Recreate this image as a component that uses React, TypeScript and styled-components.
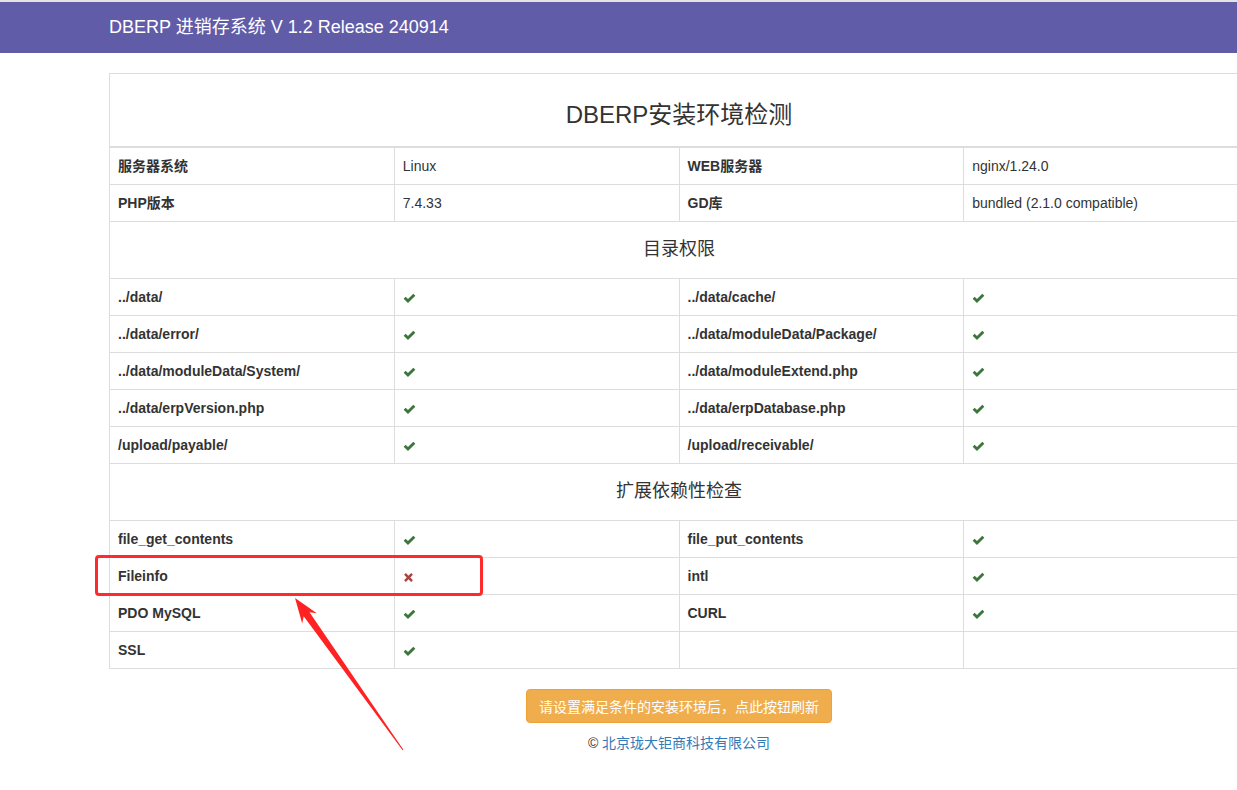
import styled, { createGlobalStyle } from 'styled-components';

const GlobalStyle = createGlobalStyle`
  html, body {
    margin: 0;
    padding: 0;
    overflow-x: hidden;
    background: #fff;
  }
  body {
    font-family: "Liberation Sans", Arial, "Noto Sans CJK SC", sans-serif;
    font-size: 14px;
    line-height: 1.42857;
    color: #333;
  }
`;

const Page = styled.div`
  position: relative;
  min-height: 790px;
  width: 1237px;
`;

const TopBar = styled.header`
  height: 51px;
  border-top: 2px solid #e3e3e3;
  background-color: #615ca8;
  display: flex;
  align-items: center;
  padding-left: 109px;
  color: #fff;
  font-size: 18px;
`;

const Main = styled.main`
  padding: 20px 0 0 109px;
`;

const Wrap = styled.div`
  width: 1140px;
  display: flex;
  flex-direction: column;
  align-items: center;
`;

const Table = styled.table`
  width: 1140px;
  table-layout: fixed;
  border-collapse: collapse;
  border: 1px solid #ddd;
`;

const TitleCell = styled.th`
  height: 62px;
  padding: 10px 0 0;
  font-size: 24px;
  line-height: 1.1;
  font-weight: normal;
  color: #333;
  text-align: center;
  vertical-align: middle;
  border-bottom: 2px solid #ddd;
`;

const SectionCell = styled.td`
  height: 56px;
  padding: 0;
  font-size: 18px;
  text-align: center;
  vertical-align: middle;
  border-top: 1px solid #ddd;
`;

const Cell = styled.td<{ $label?: boolean }>`
  padding: 9px 8px 7px;
  height: 20px;
  border: 1px solid #ddd;
  font-weight: ${(p) => (p.$label ? 'bold' : 'normal')};
  color: #333;
  white-space: nowrap;
  vertical-align: middle;

  svg {
    display: block;
  }
`;

const RefreshButton = styled.button`
  margin-top: 20px;
  height: 34px;
  padding: 0 12px;
  background-color: #f0ad4e;
  border: 1px solid #eea236;
  border-radius: 4px;
  color: #fff;
  font-family: inherit;
  font-size: 14px;
  cursor: pointer;
`;

const Footer = styled.p`
  margin: 11px 0 0;
  font-size: 14px;
  color: #333;

  a {
    color: #337ab7;
    text-decoration: none;
  }
`;

const Highlight = styled.div`
  position: absolute;
  left: 95px;
  top: 555px;
  width: 382px;
  height: 35px;
  border: 3px solid #ff2b2b;
  border-radius: 4px;
  pointer-events: none;
`;

const ArrowLayer = styled.svg`
  position: absolute;
  left: 0;
  top: 0;
  pointer-events: none;
`;

const Ok = () => (
  <svg width="13" height="11" viewBox="0 0 12 10">
    <path d="M0.6 5.2 L2.5 3.3 L4.6 5.4 L9.5 0.5 L11.4 2.4 L4.6 9.2 Z" fill="#3c763d" />
  </svg>
);

const Fail = () => (
  <svg width="11" height="11" viewBox="0 0 10 10">
    <path d="M1 2.6 L2.6 1 L5 3.4 L7.4 1 L9 2.6 L6.6 5 L9 7.4 L7.4 9 L5 6.6 L2.6 9 L1 7.4 L3.4 5 Z" fill="#a94442" />
  </svg>
);

type Item = [string, boolean] | null;

const dirs: [Item, Item][] = [
  [['../data/', true], ['../data/cache/', true]],
  [['../data/error/', true], ['../data/moduleData/Package/', true]],
  [['../data/moduleData/System/', true], ['../data/moduleExtend.php', true]],
  [['../data/erpVersion.php', true], ['../data/erpDatabase.php', true]],
  [['/upload/payable/', true], ['/upload/receivable/', true]],
];

const exts: [Item, Item][] = [
  [['file_get_contents', true], ['file_put_contents', true]],
  [['Fileinfo', false], ['intl', true]],
  [['PDO MySQL', true], ['CURL', true]],
  [['SSL', true], null],
];

const ItemCells = ({ item }: { item: Item }) =>
  item ? (
    <>
      <Cell $label>{item[0]}</Cell>
      <Cell>{item[1] ? <Ok /> : <Fail />}</Cell>
    </>
  ) : (
    <>
      <Cell />
      <Cell />
    </>
  );

export default function App() {
  return (
    <Page>
      <GlobalStyle />
      <TopBar>DBERP 进销存系统 V 1.2 Release 240914</TopBar>
      <Main>
        <Wrap>
          <Table>
            <thead>
              <tr>
                <TitleCell colSpan={4}>DBERP安装环境检测</TitleCell>
              </tr>
            </thead>
            <tbody>
              <tr>
                <Cell $label>服务器系统</Cell>
                <Cell>Linux</Cell>
                <Cell $label>WEB服务器</Cell>
                <Cell>nginx/1.24.0</Cell>
              </tr>
              <tr>
                <Cell $label>PHP版本</Cell>
                <Cell>7.4.33</Cell>
                <Cell $label>GD库</Cell>
                <Cell>bundled (2.1.0 compatible)</Cell>
              </tr>
              <tr>
                <SectionCell colSpan={4}>目录权限</SectionCell>
              </tr>
              {dirs.map((row, i) => (
                <tr key={'d' + i}>
                  <ItemCells item={row[0]} />
                  <ItemCells item={row[1]} />
                </tr>
              ))}
              <tr>
                <SectionCell colSpan={4}>扩展依赖性检查</SectionCell>
              </tr>
              {exts.map((row, i) => (
                <tr key={'e' + i}>
                  <ItemCells item={row[0]} />
                  <ItemCells item={row[1]} />
                </tr>
              ))}
            </tbody>
          </Table>
          <RefreshButton type="button">请设置满足条件的安装环境后，点此按钮刷新</RefreshButton>
          <Footer>
            © <a href="#">北京珑大钜商科技有限公司</a>
          </Footer>
        </Wrap>
      </Main>

      <Highlight />
      <ArrowLayer width="1237" height="790" viewBox="0 0 1237 790">
        <polygon
          points="295,598 316.8,613.2 309.5,612.3 403.4,749.7 402.6,750.3 303.7,616.3 302.2,623.6"
          fill="#ff2222"
        />
      </ArrowLayer>
    </Page>
  );
}
